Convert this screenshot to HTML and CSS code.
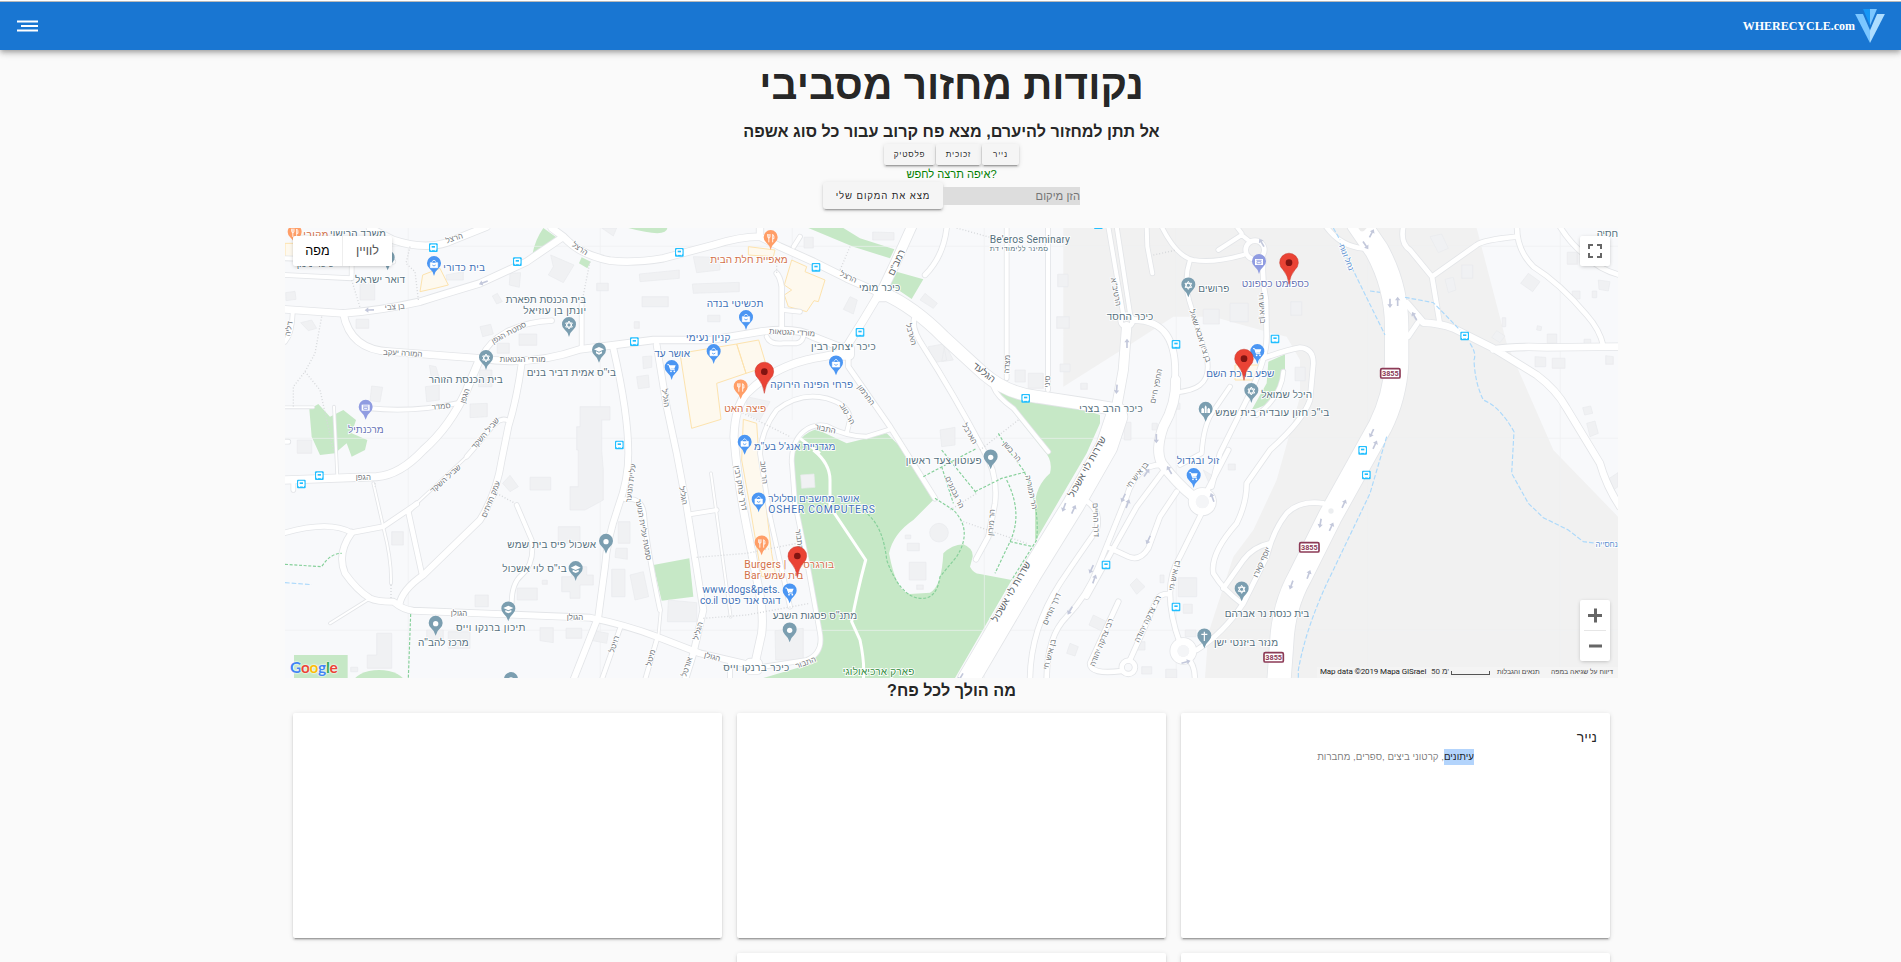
FILE: index.html
```html
<!DOCTYPE html>
<html lang="he">
<head>
<meta charset="utf-8">
<title>WHERECYCLE.com</title>
<link rel="stylesheet" href="styles.css">
</head>
<body>
<header class="toolbar">
  <svg class="menu-icon" viewBox="0 0 21 12" width="21" height="12"><path d="M0 .4h21v2H0zM4 5h17v2H4zM0 9.6h21v2H0z" fill="#fff"/></svg>
  <div class="brand">
    <span class="brand-name">WHERECYCLE.com</span>
    <svg class="brand-logo" viewBox="0 0 87.5 100" width="30" height="34"><path fill="#1697f6" d="M43.75 0H23.31l20.44 48.32z"/><path fill="#7bc6ff" d="M43.75 62.5V100L0 14.58h22.92z"/><path fill="#7bc6ff" d="M43.75 0h20.44L43.75 48.32z"/><path fill="#aeddff" d="M43.75 62.5V100L87.5 14.58H64.58z"/></svg>
  </div>
</header>

<main class="page">
  <h1 class="title" dir="rtl">נקודות מחזור מסביבי</h1>
  <h2 class="subtitle" dir="rtl">אל תתן למחזור להיערם, מצא פח קרוב עבור כל סוג אשפה</h2>
  <div class="types">
    <button class="btn btn-small type-plastic">פלסטיק</button>
    <button class="btn btn-small type-glass">זכוכית</button>
    <button class="btn btn-small type-paper">נייר</button>
  </div>
  <p class="hint">איפה תרצה לחפש?</p>
  <div class="search">
    <button class="btn btn-locate">מצא את המקום שלי</button>
    <input class="place" type="text" dir="rtl" placeholder="הזן מיקום">
  </div>

  <section class="map">
    <svg class="map-canvas" viewBox="15 24 3999 1350" width="1333" height="450">
      <defs>
        <g id="roads" fill="none" stroke-linecap="round" stroke-linejoin="round">
          <path class="w20" d="M270 24L340 60Q430 90 500 68L620 20M15 268L190 280Q300 272 420 245Q500 220 600 190L740 125L850 50L815 24M850 50Q900 105 990 122Q1060 130 1150 115L1300 75Q1380 50 1440 50V20M1440 50L1500 80L1600 125L1700 175L1790 215"/>
          <path class="w12" d="M15 165L215 175V115M15 115L340 125M38 280Q36 340 15 365M270 565Q400 578 530 550M905 250V385M1000 24"/>
          <path class="w20" d="M190 280Q210 390 330 395L600 415Q750 440 900 388L1120 360L1290 360L1440 335Q1550 320 1600 350L1690 385"/>
          <path class="w14" d="M815 302Q740 305 680 335Q625 365 605 410M385 875L425 1060M15 938Q150 900 215 938L310 920L410 852"/>
          <path class="w22" d="M600 415L560 510Q510 620 430 690Q360 765 290 770L15 780"/>
          <path class="w18" d="M725 430Q710 540 685 620L665 720Q650 820 600 900L430 1065Q365 1110 358 1155M215 938Q170 1000 195 1060Q230 1110 270 1135Q290 1145 340 1145Q370 1170 400 1172L930 1193Q1040 1215 1130 1250L1260 1300L1410 1335"/>
          <path class="w12" d="M680 600Q655 590 620 640L560 710M410 850L385 875M710 855L755 960Q765 1030 725 1065Q695 1090 695 1150M40 785V810M15 665H25"/>
          <path class="w6" d="M560 710L410 850M280 790L312 930Q335 1020 333 1090M270 1135L150 1210M162 560L172 770M15 562H100M1293 760L1352 1190M1142 1175L1135 1250"/>
          <path class="w18" d="M1000 385Q1045 580 1045 700Q1045 780 1015 860Q980 960 975 1040L955 1190L880 1380M1130 375L1160 560L1190 700L1220 860L1270 1170L1240 1300L1215 1380"/>
          <path class="w12" d="M1035 838Q1085 830 1092 880Q1100 980 1140 1170M1130 1260L1095 1380M1020 1225L965 1380M1235 882L1310 870M1350 1330V1374"/>
          <path class="w22" d="M1680 400L1630 410Q1490 430 1400 520Q1365 560 1362 650Q1372 780 1400 920L1435 1100Q1452 1180 1445 1240L1425 1330M1795 225L1750 300L1700 380"/>
          <path class="w12" d="M1440 700Q1445 630 1490 570Q1560 515 1640 535Q1710 555 1710 600L1700 640M1535 730Q1535 665 1570 635Q1600 610 1640 618Q1700 650 1760 650L1830 628M1535 720L1545 850L1580 1020L1620 1240Q1630 1300 1580 1320L1450 1340M1440 700L1470 890L1530 1160M1460 350Q1470 375 1510 370H1550Q1570 365 1570 345M1510 270L1560 275M1541 80L1560 50"/>
          <path class="w14" d="M1505 330V200Q1500 170 1490 160M1705 400V440L1830 620L1965 835M1905 290Q1890 320 1930 380Q2020 520 2110 690Q2155 760 2145 850L2125 950L2088 1018M2000 24Q1990 110 1935 165"/>
          <path class="w36" d="M1810 220Q1900 260 1990 350L2110 460Q2180 520 2270 530L2400 550L2520 570"/>
          <path class="w28" d="M1805 215L1850 120L1895 20M2540 320L2530 450L2510 560"/>
          <path class="w12" d="M2180 20V475M2304 20V510M2140 500Q2150 530 2200 565L2305 695M2485 20L2530 285M2510 20L2550 280M2600 20L2602 80L2617 160M2645 20Q2690 110 2740 120Q2800 130 2890 105M2815 90L2885 45L2910 65M2870 20L2885 40M2730 120Q2710 180 2727 240L2780 410Q2792 470 2760 495Q2740 512 2685 518M2850 500L2795 580Q2770 620 2765 700L2700 735M3010 455Q3005 530 2930 585"/>
          <path class="w64" d="M2510 590L2480 680L2380 855L2250 1065L2065 1380"/>
          <path class="w18" d="M2560 300Q2630 300 2660 345Q2690 390 2685 480"/>
          <path class="w14" d="M2950 120Q2945 180 2958 240L2960 350Q2960 420 2900 540L2820 700L2795 800M2950 415Q3020 390 3060 383Q3100 385 3100 430L3090 540Q3070 600 2970 690L2900 790Q2900 850 2870 910Q2790 1000 2800 1060Q2830 1110 2885 1150"/>
          <path class="w28" d="M2687 480Q2690 550 2650 620Q2625 690 2645 730Q2690 790 2740 830"/>
          <path class="w70" d="M3235 10L3290 90Q3350 200 3350 320V430Q3345 530 3300 620L3150 890L3060 1070Q3010 1160 3005 1270L2997 1380"/>
          <path class="w14" d="M3135 15Q3180 80 3250 85M3370 20Q3360 70 3390 90L3456 170L3480 315M3456 170L3590 75Q3610 60 3710 50M3711 20Q3710 90 3760 140Q3840 190 3920 285Q3960 330 3970 378M3840 20Q3870 70 3920 110Q3960 150 4020 165M3385 350L3412 310"/>
          <path class="w20" d="M3380 250L3430 308Q3480 310 3520 325L3640 385L3770 465Q3830 510 3860 565L3960 730Q3980 800 4020 860M3640 388Q3700 378 3800 382L4020 380"/>
          <path class="w14" d="M3130 850Q3060 840 3020 880Q2980 930 2960 1010L2890 1150Q2830 1240 2750 1290M2970 970Q2920 980 2890 1020L2830 1105"/>
          <path class="w14" d="M2650 735Q2570 730 2540 830L2455 1040Q2420 1130 2360 1190Q2300 1250 2300 1380M2660 740L2570 860L2500 985L2420 1130M2480 980L2545 1010Q2580 1025 2605 985L2640 890L2690 815M2767 875L2700 1010Q2670 1060 2670 1120Q2670 1190 2700 1270M2720 1315Q2745 1330 2745 1380M2415 840Q2465 870 2450 930Q2400 1000 2340 1090Q2250 1230 2250 1380M2515 1145L2430 1330Q2430 1365 2525 1353M2550 1320L2630 1140Q2640 1120 2670 1122M2780 815L2845 690"/>
          <path class="w22" d="M2797 845a30 30 0 1 0-60 0a30 30 0 1 0 60 0M2738 1293a28 28 0 1 0-56 0a28 28 0 1 0 56 0"/>
          <path class="w14" d="M2565 1342a20 20 0 1 0-40 0a20 20 0 1 0 40 0M2953 90a28 28 0 1 0-56 0a28 28 0 1 0 56 0M2558 302a18 18 0 1 0-36 0a18 18 0 1 0 36 0"/>
          <path class="w28" d="M1708 385h-20v20h20zM1795 215h20v15h-20zM1410 1330h22v18h-22z"/>
        </g>
        <g id="dot"><path d="M0 36Q-3 22-14 13A21 21 0 1 1 14 13Q3 22 0 36Z" fill="currentColor"/><circle r="8" fill="#fff"/></g>
        <g id="bag"><path d="M0 36Q-3 22-14 13A21 21 0 1 1 14 13Q3 22 0 36Z" fill="currentColor"/><path d="M-11-4H11V11H-11ZM-5-4V-8Q0-15 5-8V-4" fill="#fff" stroke="#fff" stroke-width="2"/><path d="M-5-4V-7Q0-13 5-7V-4Z" fill="currentColor"/><path d="M-5 3Q0 9 5 3" fill="none" stroke="currentColor" stroke-width="2.5"/></g>
        <g id="cart"><path d="M0 36Q-3 22-14 13A21 21 0 1 1 14 13Q3 22 0 36Z" fill="currentColor"/><path d="M-13-10H-8L-3 5H9" fill="none" stroke="#fff" stroke-width="3"/><path d="M-8-8H12L8 2H-4Z" fill="#fff"/><circle cx="-2" cy="10" r="2.6" fill="#fff"/><circle cx="8" cy="10" r="2.6" fill="#fff"/></g>
        <g id="food"><path d="M0 36Q-3 22-14 13A21 21 0 1 1 14 13Q3 22 0 36Z" fill="currentColor"/><path d="M-9-12V-4Q-9 0-5.500 0V13M-5.500-12V0Q-2 0-2-4V-12M6 13V-11Q11-8 10 2H6" fill="none" stroke="#fff" stroke-width="2.600"/></g>
        <g id="star"><path d="M0 36Q-3 22-14 13A21 21 0 1 1 14 13Q3 22 0 36Z" fill="currentColor"/><path d="M0-12L10 6H-10ZM0 12L10-6H-10Z" fill="none" stroke="#fff" stroke-width="3"/></g>
        <g id="cap"><path d="M0 36Q-3 22-14 13A21 21 0 1 1 14 13Q3 22 0 36Z" fill="currentColor"/><path d="M-15-4L0-11L15-4L0 3ZM-9 2L0 6L9 2V8L0 12L-9 8Z" fill="#fff"/></g>
        <g id="atm"><path d="M0 36Q-3 22-14 13A21 21 0 1 1 14 13Q3 22 0 36Z" fill="currentColor"/><path d="M-12-9H12V9H-12Z" fill="#fff"/><path d="M-8-5H8M-6 5V-1H6V5Z" fill="none" stroke="currentColor" stroke-width="2.500"/></g>
        <g id="city"><path d="M0 36Q-3 22-14 13A21 21 0 1 1 14 13Q3 22 0 36Z" fill="currentColor"/><path d="M-13 10V-2L-9-6L-5-2V10ZM-3 10V-8L0-13L3-8V10ZM5 10V-2L9-6L13-2V10Z" fill="#fff"/></g>
        <g id="cross"><path d="M0 36Q-3 22-14 13A21 21 0 1 1 14 13Q3 22 0 36Z" fill="currentColor"/><path d="M0-14V14M-9-6H9" stroke="#fff" stroke-width="3.500"/></g>
        <g id="bus"><rect x="-13" y="-13" width="26" height="26" rx="3" fill="#22bfff"/><path d="M-8-8H8V6H-8ZM-6 6V9M6 6V9" fill="#fff" stroke="#fff" stroke-width="3"/><path d="M-5-5H5V0H-5Z" fill="#22bfff"/></g>
        <path id="arrow" d="M0-14L8-3H2.500V14H-2.500V-3H-8Z" fill="#c3c8db"/>
        <g id="shield"><rect x="-29" y="-14" width="58" height="28" rx="4" fill="#fff" stroke="#8c3a56" stroke-width="5"/><text class="shield-text" y="8">3855</text></g>
        <g id="marker"><path d="M0 65Q-3 38-18 21A28 28 0 1 1 18 21Q3 38 0 65Z" fill="#ea4335" stroke="#c5372b" stroke-width="1.500"/><circle r="10" fill="#811411"/></g>
      </defs>

      <rect x="15" y="24" width="3999" height="1350" fill="#f8f9fb"/>
      <path fill="#f1f1f1" d="M2350 24V500L2540 380L2680 290H2800L2960 335L3020 350L3060 420V530L2990 780L2920 930L2860 1010L2785 1240L2775 1374H4014V890L3820 690L3680 370L3590 24Z"/>
      <g fill="#c6e8c6">
        <path d="M790 24L833 55L758 100Q765 60 790 24ZM905 112L932 125L922 145L897 130ZM88 568L115 552L150 590L190 570L228 600L215 640L262 660L255 690L215 710L200 670L165 700L120 705L95 650ZM1045 24H1162Q1160 55 1045 24ZM1585 24H1690L1740 55L1843 88L1830 115L1720 80ZM1850 155L1930 178L1895 237L1825 190Z"/>
        <path d="M1540 700Q1560 640 1610 628L1700 670L1820 640L1880 700L1965 835L1900 900Q1840 940 1827 1000Q1850 1120 1890 1122L1950 1118Q1985 1100 1990 1000Q2015 975 2050 973Q2080 985 2078 1010L2070 1040Q2080 1060 2100 1062L2195 1080L2025 1374H1450L1600 1330L1620 1240L1590 1100L1550 900Z"/>
        <path d="M2140 500L2250 545L2400 565L2460 585V610L2420 700L2265 965V860Q2265 800 2310 760Q2320 720 2290 690ZM2965 425L3015 403V470Q3000 550 2915 570L2960 490ZM1120 1035L1228 1015L1240 1130L1145 1142ZM42 1305H203V1374H42Z"/>
        <ellipse cx="297" cy="1390" rx="78" ry="40"/>
      </g>
      <path class="grid" d="M385 24V1374M961 24V1374M1537 24V600M2113 24V1374M2689 24V1374M3265 24V1374M3841 24V1374M15 79H4014M15 655H4014M15 1231H4014"/>
      <g class="buildings">
        <path d="M812 105L882 135L850 188L805 165L820 140ZM950 190H985V212H950ZM965 24H1010L1000 48ZM690 160L722 158L718 202L688 195ZM637 228L652 220L667 245L650 252ZM600 320L632 313L640 342L608 350ZM717 342H770V376H717ZM652 370L688 370V400H652ZM240 190H284V240H240ZM17 218L45 214L48 238L18 242ZM62 308L95 300L110 325L85 332ZM228 298H266V325H228ZM275 498L308 502L300 546L270 542ZM448 436L468 440L478 475L455 480ZM436 500L478 495V540L440 545ZM570 552L622 550V590L570 593ZM52 660H95V700H52ZM498 165L550 155V180H500ZM600 450H636V500H595Z"/>
        <path d="M1240 110L1320 112V150L1250 158ZM1078 162L1198 150V175L1080 185ZM1237 192L1378 187V215L1240 220ZM1086 230H1165V260H1086ZM1283 286H1320V305H1283ZM1063 305H1078V325H1063ZM1088 410L1115 408V442L1090 446ZM1070 470L1105 465L1108 502L1075 506ZM1400 530L1470 545L1440 600L1400 580ZM1572 52H1600V84H1572ZM1778 36L1842 38V60H1778ZM1710 230L1732 240L1720 282L1690 268ZM1935 220L1972 250L1960 265L1920 240ZM1945 380L1990 372L2000 420L1955 430ZM1980 630L2025 622V675L1985 680ZM1995 372L2020 420L1985 425ZM2333 163H2364V200H2333ZM2330 290H2368V325H2330ZM2340 432H2370V455H2340ZM2402 490H2422V508H2402ZM2205 450H2236V486H2205ZM2245 460H2290V505H2245ZM2533 607H2553V660H2533ZM2616 610H2632V630H2616ZM2686 550H2700V568H2686ZM2770 268H2818V312H2770ZM2850 250H2905V305H2850Z"/>
        <path d="M900 560L990 560V600H965V690L970 750V840L915 870H870V800H895V690H890V620H900ZM835 920H900V970H835ZM845 1070H875V1040H920V1065H940V1095H900V1135H870V1115H845ZM750 772H812V810H750ZM668 790L690 766L715 800L690 815ZM335 935H370V975H335ZM290 1240H335V1345H262V1305H290ZM505 1235H570V1285H505ZM440 1230H490V1260H440ZM585 1125H625V1160H585ZM712 1104H772V1140H712ZM780 1223H820V1268L780 1262ZM858 1225H905V1255H858ZM940 1232L985 1240L980 1270L938 1262ZM787 1081H802V1093H787ZM212 1342H233V1355H212Z"/>
        <path d="M1015 905H1050V970H1015ZM1008 985H1042V1018L1005 1012ZM995 1048H1035V1130H995ZM1050 1065L1090 1055L1106 1130L1065 1140ZM1165 1140L1250 1148V1205H1162ZM1485 1232L1570 1225V1320H1487ZM1562 765L1602 762L1605 802L1565 805ZM1876 945H1892V956H1876ZM1882 970H1918V992H1882ZM1888 1027H1938V1080H1888ZM1910 1095H1930V1108H1910ZM2570 1075L2595 1100L2570 1123L2550 1095ZM2440 1185L2480 1205L2465 1233L2427 1215ZM2370 1270L2395 1280L2385 1308L2360 1300ZM2695 1073H2750V1130H2695ZM2710 1153H2737V1180H2710ZM2640 1065H2652V1088H2640ZM2716 1230H2748V1250H2716ZM2570 1265H2595V1290H2570ZM2585 1340H2615V1362H2585ZM2657 1348H2690V1374H2657ZM2845 732H2866V750H2845ZM2770 750L2800 768L2785 785Z"/>
        <path d="M3032 245H3065V286H3032ZM3450 50L3485 42L3505 85L3475 98ZM3495 178L3520 172L3528 210L3505 218ZM3545 135H3578V175H3545ZM3745 160L3780 185L3758 215L3722 190ZM3862 97H3892V133H3862ZM3877 213H3900V237H3877ZM3937 213H3950V233H3937ZM3955 180L3990 185L3985 213L3957 208ZM3667 293H3677V320H3667ZM3650 332L3675 348L3660 368L3635 352ZM3772 317L3785 320L3783 332L3770 330ZM3802 342H3830V370H3802ZM3912 358H3932V376H3912ZM3765 410L3797 412V440H3765ZM3817 415H3855V445H3817ZM3977 407L4000 410V433H3977ZM3908 563L3932 558L3938 580L3914 585ZM3920 610L3945 603L3955 640L3930 650ZM3045 442H3076V482H3045ZM3988 775L4014 758V800L3998 812Z"/>
        <circle cx="1977" cy="938" r="28"/>
      </g>
      <g class="shops">
        <path d="M1200 400L1370 372L1398 460L1310 490L1323 598L1235 625ZM1370 372L1436 360L1460 440L1398 460ZM1535 120L1580 140L1575 155L1635 180L1615 245L1602 242L1580 275L1525 260L1513 225L1535 210L1513 195ZM1405 80L1485 90L1480 110L1405 105ZM1390 598L1430 610L1436 700L1450 790L1475 1000L1488 1070L1445 1070L1410 860L1385 720ZM428 165L480 145L505 195L465 205L420 215ZM2865 435H2935V480H2865ZM15 70H45V120H15Z"/>
      </g>

      <use href="#roads" class="casing"/>
      <use href="#roads" class="surface"/>
      <path d="M1600 690Q1650 730 1650 780V860L1757 1020Q1730 1120 1715 1205L1740 1260Q1755 1330 1750 1380M1560 655L1620 700" class="park-path"/>
      <circle cx="2767" cy="845" r="20" fill="#f4f5f7"/><circle cx="2710" cy="1293" r="18" fill="#f4f5f7"/><circle cx="3153" cy="873" r="8" fill="#eceef0"/><path d="M3235 24Q3245 45 3260 24" fill="#ececec"/>

      <path class="dots" d="M390 80L378 130L405 155L415 240M215 180L240 262M125 290L105 400L75 455L40 500V560M75 455L120 510L160 690M930 125L905 250M285 790V800M333 1095V1140M650 820L705 850M1250 1012L1400 1000L1560 968M1270 1195L1400 1185L1590 1150M1380 575L1530 650M1490 110V160M1710 80L1680 150M2030 24L2130 52M2620 105L2690 90M2215 600L2100 690M2010 870L2090 820M2050 905L2240 970"/>
      <path class="trail" d="M15 1033L125 1040Q150 1000 185 1000M392 1182L385 1374M1965 835L2020 870Q2080 930 2030 1010L1980 1070Q1970 1140 1920 1135Q1860 1130 1820 1020Q1810 920 1760 880M1930 770L2090 685M2155 640L2185 690L2230 750Q2280 850 2270 960L2195 1080M2085 815L2165 775L2240 755M1985 740L2020 850M1985 690L2090 820M2180 780Q2230 880 2190 965L2145 1060M2190 965L2260 980"/>
      <path class="stream" d="M15 1088L95 1094M3180 70L3315 345M3270 213L3300 217M3375 232L3460 248L3540 330M3570 370Q3590 400 3582 420Q3585 490 3610 540Q3660 560 3702 635L3695 760L3745 850L3790 893L3865 930L3910 965L3955 970M3320 650L3270 820L3160 1050Q3080 1210 3055 1350V1374M3160 24L3180 60"/>

      <g class="road-names">
        <text transform="translate(525 62) rotate(-18)">הרצל</text><text transform="translate(895 92) rotate(35)">הרצל</text><text transform="translate(345 268) rotate(-5)">בן צבי</text><text transform="translate(34 328) rotate(-80)">דליה</text><text transform="translate(368 407) rotate(3)">המורה יעקב</text><text transform="translate(728 426)">מורדי הגטאות</text><text transform="translate(690 345) rotate(-28)">סמטת הגפן</text><text transform="translate(562 530) rotate(-72)">הגפן</text><text transform="translate(484 567) rotate(-5)">סמדר</text><text transform="translate(622 645) rotate(-50)">שביל השקד</text><text transform="translate(250 780)">הגפן</text><text transform="translate(502 782) rotate(-42)">שביל השקד</text><text transform="translate(640 840) rotate(-68)">עמק הזיתים</text><text transform="translate(537 1187)">הגולן</text><text transform="translate(885 1200)">הגולן</text>
        <text transform="translate(1060 790) rotate(-83)">עליית הנוער</text><text transform="translate(1083 930) rotate(80)">סמטת עליית הנוער</text><text transform="translate(1149 535) rotate(82)">הגליל</text><text transform="translate(1202 828) rotate(80)">הגליל</text><text transform="translate(1374 805) rotate(80)">דרך יצחק רבין</text><text transform="translate(1444 758) rotate(85)">הר טוב</text><text transform="translate(1550 960) rotate(83)">התבור</text><text transform="translate(1262 1235) rotate(-75)">הגליל</text><text transform="translate(1120 1315) rotate(-75)">מיטל</text><text transform="translate(1228 1343) rotate(-72)">אורטל</text><text transform="translate(1010 1275) rotate(-72)">רויטל</text><text transform="translate(1295 1318) rotate(14)">הגולן</text><text transform="translate(1580 1335) rotate(-20)">התבור</text><text transform="translate(1536 345) rotate(3)">מורדי הגטאות</text><text transform="translate(1702 178) rotate(25)">הרצל</text><text class="major" transform="translate(1858 132) rotate(-65)">רמב"ם</text><text transform="translate(1886 345) rotate(75)">הארבל</text><text transform="translate(1752 530) rotate(53)">החרמון</text><text transform="translate(1695 585) rotate(60)">הר טוב</text><text transform="translate(1634 634) rotate(12)">התבור</text>
        <text transform="translate(2189 433) rotate(-88)">מצדה</text><text transform="translate(2310 485) rotate(-88)">סיני</text><text class="major" transform="translate(2106 465) rotate(38)">הגלעד</text><text transform="translate(2500 217) rotate(80)">הרטיב"א</text><text transform="translate(2636 500) rotate(-78)">החפץ חיים</text><text transform="translate(2753 350) rotate(72)">בן ציון אבא שאול</text><text transform="translate(2938 265) rotate(86)">בן איש חי</text><text transform="translate(2062 645) rotate(60)">הארבל</text><text class="major" transform="translate(2430 745) rotate(-61)">שדרות לוי אשכול</text><text class="major" transform="translate(2202 1120) rotate(-60)">שדרות לוי אשכול</text><text transform="translate(2190 700) rotate(50)">הר בשן</text><text transform="translate(2017 820) rotate(65)">הר גבנונים</text><text transform="translate(2246 818) rotate(78)">הר המוריה</text><text transform="translate(2142 908) rotate(-86)">הר מירון</text><text transform="translate(2440 900) rotate(88)">דרך החיים</text><text transform="translate(2578 770) rotate(-52)">בן איש חי</text><text transform="translate(2322 1170) rotate(-66)">דרך החיים</text><text transform="translate(2316 1305) rotate(-75)">בן איש חי</text><text transform="translate(2472 1270) rotate(-68)">רבי צדקה יהודה</text><text transform="translate(2610 1200) rotate(-64)">רבי צדקה יהודה</text><text transform="translate(2690 1068) rotate(-78)">בן איש חי</text><text transform="translate(2952 1030) rotate(-66)">יוסף קארו</text>
      </g>
      <g class="water-names"><text transform="translate(3192 115) rotate(68)">נחל זנוח</text><text transform="translate(3980 980)">נחסייה</text></g>

      <g fill="#c3c8db"><use href="#arrow" transform="translate(268 270) rotate(-92)"/><use href="#arrow" transform="translate(610 188) rotate(-110)"/><use href="#arrow" transform="translate(2541 370)"/><use href="#arrow" transform="translate(2510 508) rotate(185)"/><use href="#arrow" transform="translate(2629 656) rotate(180)"/><use href="#arrow" transform="translate(2945 68) rotate(-30)"/><use href="#arrow" transform="translate(3275 40) rotate(28)"/><use href="#arrow" transform="translate(3257 76) rotate(145)"/><use href="#arrow" transform="translate(3330 250) rotate(180)"/><use href="#arrow" transform="translate(3353 244)"/><use href="#arrow" transform="translate(3403 288) rotate(-30)"/><use href="#arrow" transform="translate(3275 640) rotate(205)"/><use href="#arrow" transform="translate(3285 674) rotate(25)"/><use href="#arrow" transform="translate(3192 851) rotate(25)"/><use href="#arrow" transform="translate(3121 910) rotate(190)"/><use href="#arrow" transform="translate(3154 920) rotate(25)"/><use href="#arrow" transform="translate(3086 1063) rotate(20)"/><use href="#arrow" transform="translate(3034 1095) rotate(200)"/><use href="#arrow" transform="translate(2352 862) rotate(200)"/><use href="#arrow" transform="translate(2381 868) rotate(25)"/><use href="#arrow" transform="translate(2530 834) rotate(205)"/><use href="#arrow" transform="translate(2543 851) rotate(20)"/><use href="#arrow" transform="translate(2600 758) rotate(35)"/><use href="#arrow" transform="translate(2668 750) rotate(-30)"/><use href="#arrow" transform="translate(2797 832) rotate(-20)"/><use href="#arrow" transform="translate(2605 960) rotate(205)"/><use href="#arrow" transform="translate(2434 1048) rotate(205)"/><use href="#arrow" transform="translate(2443 1077) rotate(20)"/><use href="#arrow" transform="translate(2370 1172) rotate(210)"/><use href="#arrow" transform="translate(2718 1326) rotate(75)"/><use href="#arrow" transform="translate(2042 1372) rotate(210)"/></g>

      <g><use href="#bus" x="460" y="83"/><use href="#bus" x="712" y="125"/><use href="#bus" x="1198" y="97"/><use href="#bus" x="1608" y="142"/><use href="#bus" x="1740" y="337"/><use href="#bus" x="1063" y="365"/><use href="#bus" x="1018" y="675"/><use href="#bus" x="118" y="767"/><use href="#bus" x="64" y="792"/><use href="#bus" x="2237" y="535"/><use href="#bus" x="2455" y="14"/><use href="#bus" x="2688" y="373"/><use href="#bus" x="2985" y="357"/><use href="#bus" x="3554" y="348"/><use href="#bus" x="3248" y="691"/><use href="#bus" x="3259" y="765"/><use href="#bus" x="2478" y="1035"/><use href="#bus" x="2688" y="1161"/></g>
      <g><use href="#shield" x="3331" y="460"/><use href="#shield" x="3088" y="982"/><use href="#shield" x="2981" y="1312"/></g>

      <g class="poi place-poi">
        <use href="#dot" x="323" y="115"/><use href="#star" x="867" y="315"/><use href="#star" x="618" y="414"/><use href="#cap" x="957" y="392"/><use href="#dot" x="978" y="965"/><use href="#cap" x="887" y="1047"/><use href="#cap" x="685" y="1168"/><use href="#dot" x="467" y="1211"/><use href="#dot" x="693" y="1380"/><use href="#dot" x="1529" y="1231"/><use href="#dot" x="2132" y="712"/><use href="#star" x="2725" y="196"/><use href="#star" x="2914" y="513"/><use href="#city" x="2777" y="569"/><use href="#star" x="2885" y="1108"/><use href="#cross" x="2773" y="1249"/>
        <text x="150" y="52" textLength="168">משרד הרישוי</text><text x="50" y="142" textLength="112">כיכר נימן</text><text x="225" y="190" textLength="150">דואר ישראל</text><text x="677" y="250" textLength="241">בית הכנסת תפארת</text><text x="730" y="281" textLength="188">יונתן בן עוזיאל</text><text x="446" y="488" textLength="222">בית הכנסת הזוהר</text><text x="740" y="467" textLength="268">בי"ס אמית דביר בנים</text><text x="682" y="985" textLength="266">אשכול פיס בית שמש</text><text x="667" y="1057" textLength="193">בי"ס לוי אשכול</text><text x="528" y="1234" textLength="208">תיכון ברנקו וייס</text><text x="414" y="1277" textLength="152">מרכז להב"ה</text><text x="1478" y="1197" textLength="253">מתנ"ס פסגות השבע</text><text x="1330" y="1352" textLength="198">כיכר ברנקו וייס</text><text x="1877" y="732" textLength="228">פעוטון צעד ראשון</text><text x="1737" y="212" textLength="124">כיכר מומי</text><text x="1593" y="389" textLength="194">כיכר יצחק רבין</text><text x="2480" y="299" textLength="140">כיכר החסד</text><text x="2398" y="576" textLength="190">כיכר הרב בצרי</text><text x="2755" y="216" textLength="93">פרושים</text><text x="2944" y="533" textLength="152">היכל שמואל</text><text x="2806" y="589" textLength="342">בי"כ חזון עובדיה בית שמש</text><text x="2834" y="1191" textLength="254">בית כנסת נר אברהם</text><text x="2802" y="1279" textLength="192">מנזר ביזנטי ישן</text><text x="3950" y="50" textLength="64">חסיה</text><text class="latin" x="2129" y="69" textLength="241">Be'eros Seminary</text><text class="small" x="2129" y="92" textLength="175">סמינר ללימודי דת</text>
      </g>
      <g class="poi shop-poi">
        <use href="#bag" x="462" y="132"/><use href="#bag" x="1398" y="294"/><use href="#bag" x="1301" y="396"/><use href="#cart" x="1175" y="444"/><use href="#bag" x="1668" y="430"/><use href="#bag" x="1394" y="668"/><use href="#bag" x="1436" y="841"/><use href="#cart" x="1529" y="1114"/><use href="#cart" x="2932" y="396"/><use href="#cart" x="2741" y="768"/>
        <text x="490" y="154" textLength="125">בית כדורי</text><text x="1280" y="261" textLength="170">תכשיטי בנדה</text><text x="1218" y="362" textLength="133">קניון נעימי</text><text x="1123" y="410" textLength="107">אושר עד</text><text x="1471" y="504" textLength="248">פרחי הפינה הירוקה</text><text x="1422" y="689" textLength="244">מגדניית אנג'ל בע"מ</text><text x="1465" y="847" textLength="273">אושר מחשבים וסלולר</text><text class="latin" x="1465" y="878" textLength="320">OSHER COMPUTERS</text><text class="latin" x="1267" y="1118" textLength="233">www.dogs&amp;pets.</text><text class="latin" x="1260" y="1151" textLength="54">co.il</text><text x="1324" y="1151" textLength="178">דוגס אנד פטס</text><text x="2779" y="471" textLength="204">שפע ברכת השם</text><text x="2690" y="733" textLength="128">זול ובגדול</text>
      </g>
      <g class="poi food-poi">
        <use href="#food" x="44" y="38"/><use href="#food" x="1472" y="54"/><use href="#food" x="1382" y="502"/><use href="#food" x="1445" y="970"/>
        <text x="70" y="54" textLength="75">מקורי</text><text x="1291" y="129" textLength="232">מאפיית חלת הבית</text><text x="1333" y="577" textLength="125">פיצה האט</text><text class="latin" x="1393" y="1044" textLength="126">Burgers |</text><text x="1570" y="1044" textLength="92">בורגרס</text><text class="latin" x="1393" y="1077" textLength="48">Bar</text><text x="1452" y="1077" textLength="118">בית שמש</text>
      </g>
      <g class="poi bank-poi"><use href="#atm" x="257" y="563"/><use href="#atm" x="2937" y="126"/><text x="204" y="640" textLength="107">מרכנתיל</text><text x="2885" y="201" textLength="202">כספומט כספונט</text></g>
      <g class="poi park-poi"><text x="1688" y="1366" textLength="215">פארק ארכיאולוגי</text></g>

      <use href="#marker" x="1453" y="455"/><use href="#marker" x="1552" y="1008"/><use href="#marker" x="2892" y="416"/><use href="#marker" x="3027" y="128"/>
    </svg>
    <div class="map-types"><span class="map-type active">מפה</span><span class="map-type">לוויין</span></div>
    <div class="map-btn fullscreen"><svg viewBox="0 0 14 14" width="14" height="14"><path d="M1 5V1h4M9 1h4v4M13 9v4H9M5 13H1V9" fill="none" stroke="#666" stroke-width="2"/></svg></div>
    <div class="map-btn zoom"><svg viewBox="0 0 30 61" width="30" height="61"><path d="M8 15.500h14M15.500 8.500v14M9 46h13" stroke="#666" stroke-width="3" fill="none"/><path d="M4 30.500h22" stroke="#e6e6e6"/></svg></div>
    <div class="google-logo"><span class="g-blue">G</span><span class="g-red">o</span><span class="g-yellow">o</span><span class="g-blue">g</span><span class="g-green">l</span><span class="g-red">e</span></div>
    <div class="map-credits"><span class="credit-data">Map data ©2019 Mapa GISrael</span><span class="credit-scale"><span>50</span><span>מ'</span><i class="scale-bar"></i></span><span class="credit-terms">תנאים והגבלות</span><span class="credit-report">דיווח על שגיאה במפה</span></div>
  </section>

  <h2 class="bins-title" dir="rtl">מה הולך לכל פח?</h2>
  <section class="cards" dir="rtl">
    <article class="card"><h3 class="card-title">נייר</h3><p class="card-text"><mark class="selected">עיתונים</mark>, קרטוני ביצים ,ספרים, מחברות</p></article>
    <article class="card"></article>
    <article class="card"></article>
    <article class="card"></article>
    <article class="card"></article>
  </section>
</main>
</body>
</html>
```
FILE: styles.css
```css
* { box-sizing: border-box; }
html, body { height: 100%; overflow: hidden; }
body { margin: 0; background: #fafafa; color: rgba(0,0,0,.87); font-family: Roboto, "Liberation Sans", sans-serif; display: flex; flex-direction: column; }
h1, h2, h3, p { margin: 0; }

.toolbar { position: relative; z-index: 1; flex: none; height: 50px; border-top: 1px solid #fff; background: #1976d2; display: flex; align-items: center; justify-content: space-between; padding: 0 16px 0 17px; box-shadow: inset 0 1px #b9b9b9, 0 2px 4px -1px rgba(0,0,0,.2), 0 4px 5px rgba(0,0,0,.14), 0 1px 10px rgba(0,0,0,.12); }
.menu-icon { display: block; }
.brand { display: flex; align-items: center; color: #fff; }
.brand-name { padding-top: 2px; font: bold 12px "Liberation Serif", serif; letter-spacing: 0; }
.brand-logo { display: block; }

.page { width: 1333px; margin: 0 0 0 285px; flex: none; display: flex; flex-direction: column; align-items: center; }
.title { height: 68px; padding-top: 3px; font: bold 40.6px/64px "Liberation Sans", sans-serif; white-space: nowrap; }
.subtitle { height: 26px; font: bold 16.2px/26px "Liberation Sans", sans-serif; white-space: nowrap; }
.types { display: flex; gap: 1px; height: 21px; }
.btn { border: 0; padding: 0; border-radius: 2px; background: #f5f5f5; color: rgba(0,0,0,.87); font-family: "Liberation Sans", sans-serif; box-shadow: 0 3px 1px -2px rgba(0,0,0,.2), 0 2px 2px rgba(0,0,0,.14), 0 1px 5px rgba(0,0,0,.12); white-space: nowrap; }
.btn-small { height: 21px; font-size: 8.2px; letter-spacing: .8px; }
.type-plastic { width: 51px; } .type-glass { width: 45px; } .type-paper { width: 37px; }
.hint { height: 17px; color: green; font: 11.1px/18px "Liberation Sans", sans-serif; }
.search { height: 27px; display: flex; align-items: center; margin-bottom: 19px; }
.btn-locate { width: 120px; height: 27px; font-size: 9.6px; letter-spacing: .9px; border-radius: 3px; }
.place { width: 137px; height: 18px; padding: 0; border: 0; background: #ddd; font: 11.2px "Liberation Sans", sans-serif; }
.place::placeholder { color: #757575; }

.map { position: relative; width: 1333px; height: 450px; overflow: hidden; }
.map-canvas { display: block; }
.w6 { stroke-width: calc(6px + var(--edge)); }
.w12 { stroke-width: calc(12px + var(--edge)); }
.w14 { stroke-width: calc(14px + var(--edge)); }
.w18 { stroke-width: calc(18px + var(--edge)); }
.w20 { stroke-width: calc(20px + var(--edge)); }
.w22 { stroke-width: calc(22px + var(--edge)); }
.w28 { stroke-width: calc(28px + var(--edge)); }
.w36 { stroke-width: calc(36px + var(--edge)); }
.w64 { stroke-width: calc(64px + var(--edge)); }
.w70 { stroke-width: calc(70px + var(--edge)); }
.casing { --edge: 5px; stroke: #e3e5e8; }
.surface { --edge: 0px; stroke: #fff; }
.park-path { fill: none; stroke: #fff; stroke-width: 9px; }
.grid { fill: none; stroke: #eef0f2; stroke-width: 2px; }
.buildings { fill: #f0f1f3; stroke: #e8eaed; stroke-width: 2px; }
.shops { fill: #fef9ee; stroke: #fde3ae; stroke-width: 3px; }
.dots { fill: none; stroke: #d6d8db; stroke-width: 4px; stroke-dasharray: 3 6; }
.trail { fill: none; stroke: #86d09a; stroke-width: 3.5px; stroke-dasharray: 9 5; }
.stream { fill: none; stroke: #acd9fb; stroke-width: 3.5px; stroke-dasharray: 14 6; }
.road-names text, .water-names text { font: 23.5px "Liberation Sans", sans-serif; text-anchor: middle; fill: #74797e; stroke: #fff; stroke-width: 5px; paint-order: stroke; }
.road-names .major { font-size: 29px; fill: #5d6469; }
.water-names text { fill: #5c8fd0; }
.poi text { font: 30px "Liberation Sans", sans-serif; stroke: #fff; stroke-width: 5px; paint-order: stroke; }
.poi .latin { font: 31px Roboto, sans-serif; }
.poi .small { font-size: 22px; }
.place-poi { color: #7b9eb0; } .place-poi text { fill: #55707d; }
.shop-poi { color: #4b96f3; } .shop-poi text { fill: #4272b8; }
.food-poi { color: #ff9e67; } .food-poi text { fill: #d2704a; }
.bank-poi { color: #909ce1; } .bank-poi text { fill: #6672b5; }
.park-poi text { fill: #2f8a3c; }
.shield-text { font: bold 22px Roboto, sans-serif; fill: #8c3a56; text-anchor: middle; }

.map-types { position: absolute; left: 8px; top: 8px; display: flex; height: 30px; background: #fff; border-radius: 2px; box-shadow: 0 1px 4px -1px rgba(0,0,0,.3); }
.map-type { width: 50px; font: 12.6px/30px "Liberation Sans", sans-serif; text-align: center; color: #565656; border-left: 1px solid #eee; }
.map-type.active { width: 49px; color: #000; border-left: 0; }
.map-btn { position: absolute; right: 8px; width: 30px; background: #fff; border-radius: 2px; box-shadow: 0 1px 4px -1px rgba(0,0,0,.3); }
.fullscreen { top: 8px; height: 30px; padding: 8px; }
.fullscreen svg, .zoom svg { display: block; }
.zoom { bottom: 17px; height: 61px; }
.google-logo { position: absolute; left: 5px; bottom: 1px; font: bold 15.5px/19px Lato, sans-serif; letter-spacing: -.3px; text-shadow: 0 0 2px #fff, 0 0 2px #fff; }
.g-blue { color: #4285f4; } .g-red { color: #ea4335; } .g-yellow { color: #fbbc05; } .g-green { color: #34a853; }
.map-credits { position: absolute; right: 0; bottom: 0; height: 11px; display: flex; background: rgba(245,245,245,.7); font: 8px/10px Roboto, "Liberation Sans", sans-serif; color: #444; white-space: nowrap; padding: 0 5px 0 3px; }
.credit-data { width: 111px; letter-spacing: -.12px; color: #222; }
.credit-scale { width: 66px; display: flex; gap: 2px; }
.scale-bar { width: 39px; height: 4px; margin-top: 4px; border: 1px solid #555; border-top: 0; }
.credit-terms { width: 53px; font-family: "Liberation Sans", sans-serif; font-size: 6.8px; }
.credit-report { width: 63px; text-align: right; font-family: "Liberation Sans", sans-serif; font-size: 6.8px; }

.bins-title { height: 35px; font: bold 16.2px/25px "Liberation Sans", sans-serif; }
.cards { width: 1317px; display: grid; grid-template-columns: repeat(3, 429px); grid-auto-rows: 225px; gap: 15px; }
.card { background: #fff; border-radius: 2px; padding: 14px 13px; box-shadow: 0 3px 1px -2px rgba(0,0,0,.2), 0 2px 2px rgba(0,0,0,.14), 0 1px 5px rgba(0,0,0,.12); }
.card-title { height: 22px; font: 14px/20px "Liberation Sans", sans-serif; }
.card-text { text-align: center; color: rgba(0,0,0,.54); font: 9.7px/16px "Liberation Sans", sans-serif; }
.selected { display: inline-block; background: #b3d4fc; color: rgba(0,0,0,.87); }
```
